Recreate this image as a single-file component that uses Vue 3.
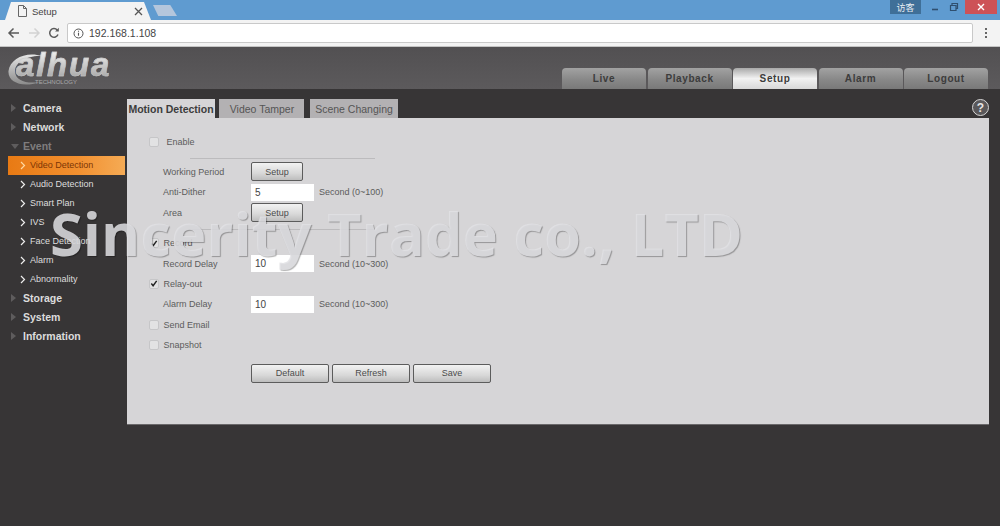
<template>
  <div class="page">
    <!-- browser tab strip -->
    <div class="tabstrip">
      <div class="browser-tab">
        <svg class="doc-icon" width="9" height="12" viewBox="0 0 9 12" fill="none">
          <path d="M.5.500h5l3 3v8h-8zM5.500.500v3h3" stroke="#666" stroke-width="1" />
        </svg>
        <span class="browser-tab-title">Setup</span>
        <svg class="tab-close" width="9" height="9" viewBox="0 0 9 9">
          <path d="M1 1l7 7M8 1L1 8" stroke="#555" stroke-width="1.300" />
        </svg>
      </div>
      <div class="new-tab"></div>
      <div class="window-controls">
        <span class="guest">访客</span>
        <svg class="win-min" width="10" height="10" viewBox="0 0 10 10">
          <path d="M1 7.500h6" stroke="#2f4f6f" stroke-width="1.600" />
        </svg>
        <svg class="win-restore" width="10" height="10" viewBox="0 0 10 10" fill="none">
          <path d="M1.500 3.500h5.500v5h-5.500zM3 3V1.500h5.500v5H7.500" stroke="#2f4f6f" stroke-width="1.200" />
        </svg>
        <span class="win-close">
          <svg width="8" height="8" viewBox="0 0 8 8">
            <path d="M1 1l6 6M7 1L1 7" stroke="#fff" stroke-width="1.400" />
          </svg>
        </span>
      </div>
    </div>

    <!-- address bar -->
    <div class="toolbar">
      <svg class="tool-icon" width="13" height="12" viewBox="0 0 13 12" fill="none">
        <path d="M12 6H2M6.500 1.500L2 6l4.500 4.500" stroke="#5a5a5a" stroke-width="1.500" />
      </svg>
      <svg class="tool-icon" width="13" height="12" viewBox="0 0 13 12" fill="none">
        <path d="M1 6h10M6.500 1.500L11 6l-4.500 4.500" stroke="#d2d2d2" stroke-width="1.500" />
      </svg>
      <svg class="tool-icon reload" width="12" height="12" viewBox="0 0 12 12" fill="none">
        <path d="M10 7.500A4.300 4.300 0 1 1 9.200 3" stroke="#5a5a5a" stroke-width="1.500" />
        <path d="M10.800.800v3.700H7.100z" fill="#5a5a5a" />
      </svg>
      <div class="address">
        <svg width="11" height="11" viewBox="0 0 11 11" fill="none">
          <circle cx="5.500" cy="5.500" r="4.500" stroke="#555" stroke-width="1" />
          <path d="M5.500 4.800v3M5.500 2.800v1" stroke="#555" stroke-width="1.100" />
        </svg>
        <span>192.168.1.108</span>
      </div>
      <span class="menu-dots"><i></i><i></i><i></i></span>
    </div>

    <!-- device header -->
    <header class="header">
      <div class="logo">
        <svg class="logo-ring" width="36" height="34" viewBox="0 0 36 34">
          <defs>
            <linearGradient id="ringFill" x1="0" y1="0" x2="0" y2="1">
              <stop offset="0" stop-color="#e6e6e6" />
              <stop offset="1" stop-color="#8b8b8b" />
            </linearGradient>
          </defs>
          <path d="M34 3C19-2 2 5 .5 18c-1 12 15 17 31 11C19 31 7 28 7 18 7 9 20 2 34 3z" fill="url(#ringFill)" />
        </svg>
        <span class="logo-word">alhua</span>
        <span class="logo-sub">TECHNOLOGY</span>
      </div>
      <nav class="mainnav">
        <a v-for="item in navItems" :key="item" class="navtab" :class="{ active: item === 'Setup' }">{{ item }}</a>
      </nav>
    </header>

    <div class="main">
      <!-- left menu -->
      <aside class="sidebar">
        <template v-for="item in menu" :key="item.label">
          <div v-if="item.sub" class="sub-item" :class="{ current: item.current }">
            <svg width="6" height="9" viewBox="0 0 6 9" fill="none">
              <path d="M1 1l3.500 3.500L1 8" :stroke="item.current ? '#ffd9a0' : '#eee'" stroke-width="1.200" />
            </svg>
            <span>{{ item.label }}</span>
          </div>
          <div v-else class="top-item" :class="{ open: item.open }">
            <span class="arrow"></span>
            <span>{{ item.label }}</span>
          </div>
        </template>
      </aside>

      <section class="content">
        <div class="content-tabs">
          <div class="subtabs">
            <a class="subtab active">Motion Detection</a>
            <a class="subtab video">Video Tamper</a>
            <a class="subtab scene">Scene Changing</a>
          </div>
          <span class="help">?</span>
        </div>

        <div class="panel">
          <div class="row enable">
            <span class="check"></span>
            <label>Enable</label>
          </div>
          <div class="rule"></div>

          <div class="row">
            <label class="field">Working Period</label>
            <button class="btn small">Setup</button>
          </div>
          <div class="row">
            <label class="field">Anti-Dither</label>
            <input class="num" value="5" />
            <span class="hint">Second (0~100)</span>
          </div>
          <div class="row">
            <label class="field">Area</label>
            <button class="btn small">Setup</button>
          </div>
          <div class="rule lower"></div>

          <div class="row">
            <span class="check on"><svg width="9" height="9" viewBox="0 0 9 9" fill="none"><path d="M1.500 4.500l2 2.500 4-5.500" stroke="#222" stroke-width="1.600" /></svg></span>
            <label>Record</label>
          </div>
          <div class="row">
            <label class="field">Record Delay</label>
            <input class="num" value="10" />
            <span class="hint">Second (10~300)</span>
          </div>
          <div class="row">
            <span class="check on"><svg width="9" height="9" viewBox="0 0 9 9" fill="none"><path d="M1.500 4.500l2 2.500 4-5.500" stroke="#222" stroke-width="1.600" /></svg></span>
            <label>Relay-out</label>
          </div>
          <div class="row">
            <label class="field">Alarm Delay</label>
            <input class="num" value="10" />
            <span class="hint">Second (10~300)</span>
          </div>
          <div class="row">
            <span class="check"></span>
            <label>Send Email</label>
          </div>
          <div class="row">
            <span class="check"></span>
            <label>Snapshot</label>
          </div>

          <div class="actions">
            <button class="btn wide">Default</button>
            <button class="btn wide">Refresh</button>
            <button class="btn wide">Save</button>
          </div>
        </div>
      </section>
    </div>

    <div class="watermark">Sincerity Trade co., LTD</div>
  </div>
</template>

<script setup>
const navItems = ['Live', 'Playback', 'Setup', 'Alarm', 'Logout']

const menu = [
  { label: 'Camera' },
  { label: 'Network' },
  { label: 'Event', open: true },
  { label: 'Video Detection', sub: true, current: true },
  { label: 'Audio Detection', sub: true },
  { label: 'Smart Plan', sub: true },
  { label: 'IVS', sub: true },
  { label: 'Face Detection', sub: true },
  { label: 'Alarm', sub: true },
  { label: 'Abnormality', sub: true },
  { label: 'Storage' },
  { label: 'System' },
  { label: 'Information' },
]
</script>

<style>
html,
body {
  margin: 0;
  background: #373536;
  overflow: hidden;
}
</style>

<style scoped>
.page {
  position: relative;
  height: 526px;
  overflow: hidden;
  display: flex;
  flex-direction: column;
  background: #373536;
  font-family: "Liberation Sans", Arial, sans-serif;
}

/* 浏览器标签栏 */
.tabstrip {
  height: 20px;
  flex-shrink: 0;
  display: flex;
  align-items: flex-end;
  background: #5f9bd0;
}

.browser-tab {
  width: 146px;
  height: 18px;
  margin-left: 5px;
  padding: 0 8px 0 13px;
  box-sizing: border-box;
  display: flex;
  align-items: center;
  background: #f3f3f3;
  clip-path: polygon(0 100%, 6px 0, 139px 0, 100% 100%);
}

.browser-tab-title {
  flex: 1;
  margin-left: 5px;
  font-size: 9.500px;
  color: #444;
}

.new-tab {
  width: 24px;
  height: 11px;
  margin: 0 0 4px 2px;
  background: #b4c6dc;
  clip-path: polygon(0 0, 72% 0, 100% 100%, 22% 100%);
}

.window-controls {
  margin-left: auto;
  align-self: flex-start;
  display: flex;
  align-items: center;
  padding-right: 3px;
}

.guest {
  width: 31px;
  height: 14px;
  margin-right: 10px;
  display: flex;
  align-items: center;
  justify-content: center;
  background: #3f6f98;
  color: #e8eef4;
  font-size: 9px;
  font-family: "Noto Sans CJK SC", sans-serif;
}

.win-min {
  margin-right: 8px;
}

.win-restore {
  margin-right: 6px;
}

.win-close {
  width: 32px;
  height: 14px;
  display: flex;
  align-items: center;
  justify-content: center;
  background: #cd5257;
}

/* 地址栏 */
.toolbar {
  height: 27px;
  flex-shrink: 0;
  display: flex;
  align-items: center;
  padding: 0 13px 0 7px;
  box-sizing: border-box;
  background: #f3f3f3;
  border-bottom: 1px solid #c4c4c4;
}

.tool-icon {
  margin-right: 8px;
}

.tool-icon.reload {
  margin-left: -1px;
  margin-right: 7px;
}

.address {
  flex: 1;
  height: 20px;
  padding-left: 5px;
  box-sizing: border-box;
  display: flex;
  align-items: center;
  gap: 5px;
  background: #fff;
  border: 1px solid #c9c9c9;
  border-radius: 2px;
  font-size: 10.500px;
  color: #444;
}

.menu-dots {
  margin-left: 12px;
  display: flex;
  flex-direction: column;
  gap: 2px;
}

.menu-dots i {
  width: 2px;
  height: 2px;
  background: #666;
}

/* 设备页头 */
.header {
  height: 42px;
  flex-shrink: 0;
  display: flex;
  justify-content: space-between;
  align-items: flex-end;
  padding: 0 12px 0 8px;
  background: linear-gradient(#525052, #5c5a5c);
}

.logo {
  position: relative;
  align-self: flex-start;
  width: 104px;
  height: 40px;
}

.logo-ring {
  position: absolute;
  left: 0;
  top: 6px;
}

.logo-word {
  position: absolute;
  left: 8px;
  top: 4px;
  font-size: 33px;
  line-height: 27px;
  font-weight: 700;
  font-style: italic;
  letter-spacing: 1.800px;
  background: linear-gradient(#f0f0f0, #a8a8a8);
  -webkit-background-clip: text;
  background-clip: text;
  color: transparent;
  -webkit-text-stroke: 0.500px #c8c8c8;
}

.logo-sub {
  position: absolute;
  left: 27px;
  top: 32px;
  font-size: 6px;
  line-height: 6px;
  color: #aaa;
}

.mainnav {
  display: flex;
  gap: 1.500px;
}

.navtab {
  width: 84px;
  height: 21px;
  display: flex;
  align-items: center;
  justify-content: center;
  border-radius: 4px 4px 0 0;
  background: linear-gradient(#a2a2a2, #888 55%, #797979);
  font-size: 10px;
  font-weight: 700;
  letter-spacing: 0.600px;
  color: #3c3c3c;
}

.navtab.active {
  background: linear-gradient(#a9a9a9, #f2f2f2 50%, #d8d8d8);
}

/* 主体 */
.main {
  flex: 1;
  display: flex;
  min-height: 0;
}

.sidebar {
  width: 127px;
  flex-shrink: 0;
  padding-top: 9.500px;
  box-sizing: border-box;
}

.top-item,
.sub-item {
  height: 19px;
  display: flex;
  align-items: center;
}

.top-item {
  padding-left: 11px;
  font-size: 10.500px;
  font-weight: 700;
  color: #dcdcdc;
}

.top-item.open {
  color: #7f7d7e;
}

.arrow {
  width: 0;
  height: 0;
  margin-right: 7px;
  border-left: 5px solid #5e5c5d;
  border-top: 4px solid transparent;
  border-bottom: 4px solid transparent;
}

.open .arrow {
  margin-right: 4px;
  border-top: 5px solid #5e5c5d;
  border-left: 4px solid transparent;
  border-right: 4px solid transparent;
  border-bottom: 0;
}

.sub-item {
  margin: 0 2px 0 8px;
  padding-left: 12px;
  gap: 4px;
  font-size: 9px;
  color: #dedede;
}

.sub-item.current {
  background: linear-gradient(90deg, #e87a14, #f29030 60%, #f5ab55);
  color: #7c3606;
}

.content {
  width: 862px;
  flex-shrink: 0;
  padding-top: 10px;
}

.content-tabs {
  height: 19px;
  display: flex;
  justify-content: space-between;
}

.subtabs {
  display: flex;
}

.subtab {
  display: flex;
  align-items: center;
  justify-content: center;
  height: 19px;
  background: #b3b1b3;
  font-size: 10.500px;
  color: #555;
}

.subtab.active {
  width: 88px;
  background: #d6d5d7;
  font-weight: 700;
  color: #3c3c3c;
}

.subtab.video {
  width: 84px;
  padding-left: 1px;
  margin-left: 4px;
}

.subtab.scene {
  width: 88px;
  margin-left: 6px;
}

.help {
  width: 15px;
  height: 15px;
  display: flex;
  align-items: center;
  justify-content: center;
  border-radius: 50%;
  background: #5a585a;
  border: 1.500px solid #d6d6d6;
  color: #e6e6e6;
  font-size: 12px;
  font-weight: 700;
}

.panel {
  height: 307px;
  box-sizing: border-box;
  padding: 14px 0 0 22px;
  background: #d6d5d7;
  border-bottom: 1px solid #6a686a;
}

.row {
  height: 20.300px;
  display: flex;
  align-items: center;
  font-size: 9px;
  color: #5c5c5c;
}

.row.enable label {
  margin-left: 3px;
}

.field {
  width: 88px;
  margin-left: 14px;
  flex-shrink: 0;
}

.check {
  width: 8px;
  height: 8px;
  margin-right: 5px;
  margin-left: -0.500px;
  flex-shrink: 0;
  display: flex;
  align-items: center;
  justify-content: center;
  background: #e2e2e3;
  border: 0.500px solid #c6c6c8;
  border-radius: 2px;
}

.rule {
  width: 185px;
  height: 1px;
  margin: 5.500px 0 3px 41px;
  background: #bcbbbd;
}

.rule.lower {
  margin-top: 6px;
  margin-bottom: 3.500px;
}

.btn {
  padding: 0;
  box-sizing: border-box;
  height: 19px;
  background: linear-gradient(#f2f2f2, #d8d8d8 60%, #bdbdbd);
  border: 1px solid #5c5c5c;
  border-radius: 2px;
  font-family: inherit;
  font-size: 9px;
  color: #4c4c4c;
}

.btn.small {
  width: 52px;
}

.btn.wide {
  width: 78px;
}

.num {
  width: 63px;
  height: 17px;
  padding: 0 4px;
  box-sizing: border-box;
  border: none;
  outline: none;
  background: #fff;
  font-family: inherit;
  font-size: 10px;
  color: #444;
}

.hint {
  margin-left: 5px;
}

.actions {
  display: flex;
  gap: 3px;
  margin: 9px 0 0 102px;
}

/* 水印 */
.watermark {
  position: absolute;
  left: 50px;
  top: 193px;
  font-family: "Open Sans", sans-serif;
  font-size: 59.700px;
  font-weight: 700;
  line-height: 80px;
  white-space: nowrap;
  color: rgba(226, 226, 229, 0.85);
  text-shadow: 1px 1px 1px rgba(0, 0, 0, 0.3);
  pointer-events: none;
}
</style>
